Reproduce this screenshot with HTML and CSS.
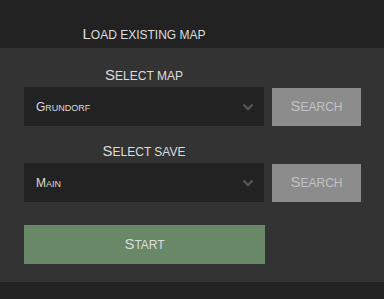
FILE: index.html
```html
<!DOCTYPE html>
<html>
<head>
<meta charset="utf-8">
<title>Load existing map</title>
<link rel="stylesheet" href="styles.css">
</head>
<body>
	<div class="top">
		<h3 class="title sc">Load existing map</h3>
	</div>
	<div class="panel">
		<div class="label sc">Select map</div>
		<div class="field">
			<div class="select">
				<span class="val">Grundorf</span>
				<svg class="chev" width="12" height="8" viewBox="0 0 12 8"><path d="M1.5 1.5 L6 6 L10.5 1.5" fill="none" stroke="#555" stroke-width="2.4"/></svg>
			</div>
			<button class="search"><span class="sc">Search</span></button>
		</div>
		<div class="label sc">Select save</div>
		<div class="field">
			<div class="select">
				<span class="val">Main</span>
				<svg class="chev" width="12" height="8" viewBox="0 0 12 8"><path d="M1.5 1.5 L6 6 L10.5 1.5" fill="none" stroke="#555" stroke-width="2.4"/></svg>
			</div>
			<button class="search"><span class="sc">Search</span></button>
		</div>
		<button class="start"><span class="sc">Start</span></button>
	</div>
</body>
</html>
```
FILE: styles.css
```css
body {margin:0; background:#222; font-family:"Liberation Sans", Arial, sans-serif; color:#ddd;}
.sc {display:block; text-transform:uppercase; font-size:12px; line-height:16px;}
.sc::first-letter {font-size:15px;}
.top {height:48px; display:flex; align-items:flex-end;}
.title {width:240px; margin:0 0 0 24px; padding-bottom:5px; text-align:center; font-weight:normal;}
.panel {background:#333; padding:19px 0 18px 24px;}
.label {width:240px; text-align:center; margin-bottom:3px;}
.field {display:flex; gap:8px; align-items:center; margin-bottom:17px;}
.select {width:240px; height:39px; box-sizing:border-box; background:#222; display:flex; align-items:center; justify-content:space-between; padding:0 10px 0 12px;}
.val {display:block; text-transform:uppercase; font-size:9px;}
.val::first-letter {font-size:12px;}
.search {width:89px; height:38px; border:none; background:#8c8c8c; color:#c2c2c2; font-family:inherit; padding:0;}
.start {display:block; width:241px; height:39px; margin-top:23px; border:none; background:#688868; color:#ddd; font-family:inherit; padding:0;}
```
